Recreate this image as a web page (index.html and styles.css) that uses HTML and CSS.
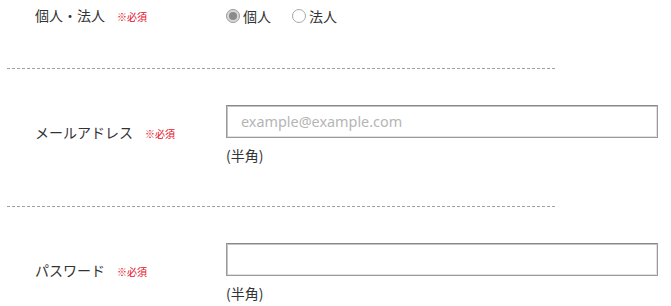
FILE: index.html
```html
<!DOCTYPE html>
<html lang="ja">
<head>
<meta charset="utf-8">
<link rel="stylesheet" href="styles.css">
</head>
<body>
<form class="form">
  <div class="row row-first">
    <div class="label">個人・法人<span class="req">※必須</span></div>
    <div class="field radios">
      <label class="radio"><span class="dot checked"></span>個人</label>
      <label class="radio"><span class="dot"></span>法人</label>
    </div>
  </div>
  <hr class="sep">
  <div class="row">
    <div class="label">メールアドレス<span class="req">※必須</span></div>
    <div class="field">
      <input class="text" type="text" placeholder="example@example.com">
      <div class="note">(半角)</div>
    </div>
  </div>
  <hr class="sep">
  <div class="row">
    <div class="label">パスワード<span class="req">※必須</span></div>
    <div class="field">
      <input class="text" type="password">
      <div class="note">(半角)</div>
    </div>
  </div>
</form>
</body>
</html>
```

FILE: styles.css
```css
html, body {
  margin: 0;
  padding: 0;
  background: #fff;
}
body {
  font-family: "Noto Sans CJK JP", "Noto Sans", sans-serif;
  font-size: 14px;
  line-height: 20px;
  color: #333;
}
.form {
  padding-left: 7px;
}
.row {
  display: grid;
  grid-template-columns: 219px 432px;
  align-items: center;
  padding: 36px 0 41px;
}
.row-first {
  padding: 5px 0 41px;
}
.label {
  padding-left: 28px;
  margin-top: -4px;
}
.row-first .label {
  margin-top: 0;
}
.req {
  color: #e60c1c;
  font-size: 10px;
  margin-left: 12px;
}
.sep {
  width: 548px;
  margin: 0;
  border: 0;
  border-top: 1px dashed #a0a0a0;
  height: 0;
}
.radios {
  display: flex;
  gap: 21px;
}
.radio {
  display: flex;
  align-items: center;
  gap: 3px;
}
.dot {
  width: 12px;
  height: 12px;
  border: 1px solid #a8a8a8;
  border-radius: 50%;
  background: #fff;
  box-sizing: content-box;
  display: flex;
  align-items: center;
  justify-content: center;
}
.dot.checked {
  background: #d8d8d8;
  border-color: #9a9a9a;
}
.dot.checked::after {
  content: "";
  width: 8px;
  height: 8px;
  border-radius: 50%;
  background: #8a8a8a;
}
.text {
  display: block;
  box-sizing: border-box;
  width: 432px;
  height: 33px;
  margin: 0;
  padding: 0 14px;
  border: 1px solid #9a9a9a;
  border-top-color: #888;
  box-shadow: inset 1px 1px 0 #c4c4c4, inset -1px -1px 0 #e2e2e2;
  font-family: "Noto Sans", "Open Sans", sans-serif;
  font-size: 14.4px;
  color: #333;
  background: #fff;
}
.text::placeholder {
  color: #b5b5b5;
}
.note {
  margin-top: 7px;
}
```
